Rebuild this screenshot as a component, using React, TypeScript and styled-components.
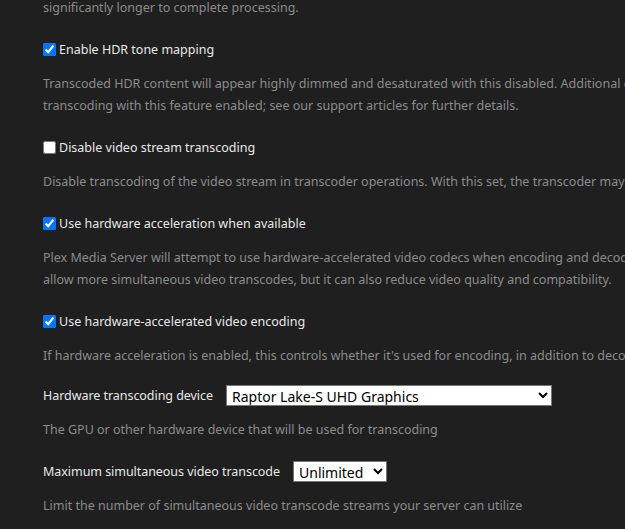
import styled, { createGlobalStyle } from "styled-components";

const GlobalStyle = createGlobalStyle`
  html, body {
    margin: 0;
    padding: 0;
    background: #1f1f1f;
    overflow: hidden;
  }
  body {
    font-family: "Noto Sans", "Open Sans", sans-serif;
  }
`;

const Page = styled.div`
  padding: 0 0 0 43px;
  margin-top: -3px;
  width: 1100px;
`;

const Section = styled.div<{ $top?: number; $gap?: number }>`
  display: flex;
  flex-direction: column;
  gap: ${(p) => p.$gap ?? 14}px;
  margin-top: ${(p) => p.$top ?? 20}px;
`;

const Description = styled.div`
  color: #8c8c8c;
  font-size: 12.5px;
  line-height: 22px;
  white-space: nowrap;
`;

const CheckRow = styled.label`
  display: flex;
  align-items: center;
  height: 20px;
  color: #e8e8e8;
  font-size: 12.5px;
`;

const Box = styled.input`
  width: 13px;
  height: 13px;
  margin: 0 3px 0 0;
`;

const SelectRow = styled.div`
  display: flex;
  align-items: center;
  gap: 13px;
  height: 21px;
  color: #e8e8e8;
  font-size: 12.5px;
  letter-spacing: -0.05px;
`;

const Picker = styled.select<{ $w: number }>`
  width: ${(p) => p.$w}px;
  height: 21px;
  box-sizing: border-box;
  font-family: "Noto Sans", "Open Sans", sans-serif;
  font-size: 14px;
  line-height: 17px;
  letter-spacing: 0;
  color: #000;
  background: #fff;
  border: 1px solid #767676;
  border-radius: 0;
  padding: 0 0 0 1px;
`;

const settings = [
  {
    label: "Enable HDR tone mapping",
    checked: true,
    lines: [
      "Transcoded HDR content will appear highly dimmed and desaturated with this disabled. Additional configuration may be required for hardware-accelerated",
      "transcoding with this feature enabled; see our support articles for further details.",
    ],
  },
  {
    label: "Disable video stream transcoding",
    checked: false,
    lines: [
      "Disable transcoding of the video stream in transcoder operations. With this set, the transcoder may only remux or copy the video stream.",
    ],
  },
  {
    label: "Use hardware acceleration when available",
    checked: true,
    lines: [
      "Plex Media Server will attempt to use hardware-accelerated video codecs when encoding and decoding video. Hardware acceleration can make transcoding faster and",
      "allow more simultaneous video transcodes, but it can also reduce video quality and compatibility.",
    ],
  },
  {
    label: "Use hardware-accelerated video encoding",
    checked: true,
    lines: [
      "If hardware acceleration is enabled, this controls whether it's used for encoding, in addition to decoding.",
    ],
  },
];

export default function App() {
  return (
    <Page>
      <GlobalStyle />
      <Description>significantly longer to complete processing.</Description>
      {settings.map((s) => (
        <Section key={s.label}>
          <CheckRow>
            <Box type="checkbox" defaultChecked={s.checked} />
            {s.label}
          </CheckRow>
          <Description>
            {s.lines.map((l, i) => (
              <div key={i}>{l}</div>
            ))}
          </Description>
        </Section>
      ))}
      <Section $top={18} $gap={13}>
        <SelectRow>
          Hardware transcoding device
          <Picker $w={326} defaultValue="raptor">
            <option value="raptor">Raptor Lake-S UHD Graphics</option>
            <option value="auto">Auto</option>
          </Picker>
        </SelectRow>
        <Description>The GPU or other hardware device that will be used for transcoding</Description>
      </Section>
      <Section $top={20} $gap={13}>
        <SelectRow>
          Maximum simultaneous video transcode
          <Picker $w={94} defaultValue="0">
            <option value="0">Unlimited</option>
            <option value="1">1</option>
            <option value="2">2</option>
          </Picker>
        </SelectRow>
        <Description>Limit the number of simultaneous video transcode streams your server can utilize</Description>
      </Section>
    </Page>
  );
}
